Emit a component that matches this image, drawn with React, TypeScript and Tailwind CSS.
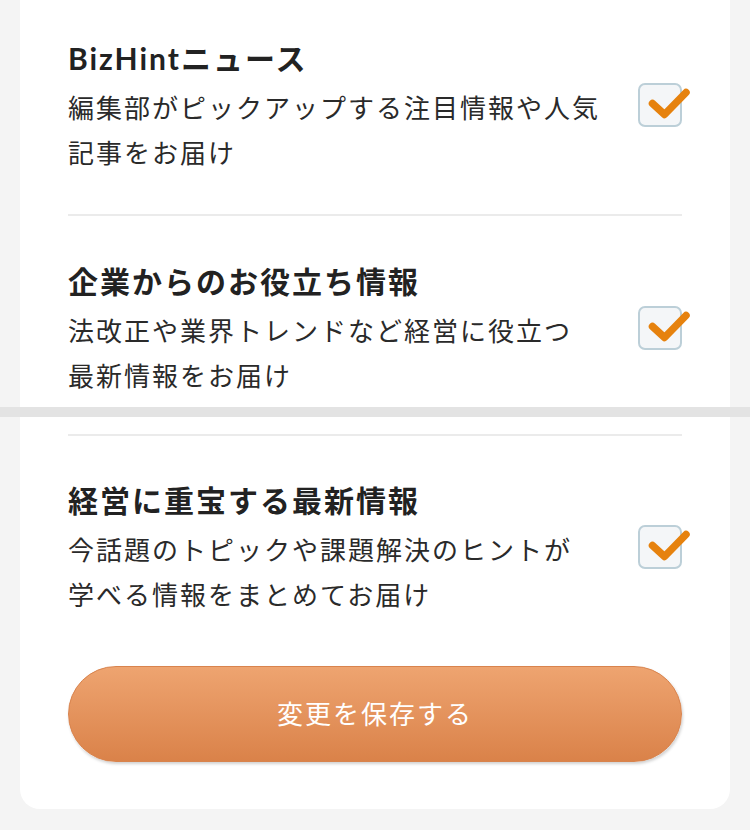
import React from "react";

const FONT = { fontFamily: 'Lato, "Noto Sans CJK JP", "Noto Sans", sans-serif' };

function Check() {
  return (
    <div className="relative mt-[-4px] h-[44px] w-[44px] shrink-0 rounded-[7px] border-2 border-[#bccfd8] bg-[#f4f6f8]">
      <svg
        className="absolute left-[-2px] top-[-2px] overflow-visible"
        width="44"
        height="44"
        viewBox="0 0 44 44"
      >
        <path
          d="M14.5 20.5 L26.5 31.5 L48 9.5"
          fill="none"
          stroke="#e6820e"
          strokeWidth="7.5"
          strokeLinecap="round"
          strokeLinejoin="round"
        />
      </svg>
    </div>
  );
}

function Item({ title, lines, cls }: { title: string; lines: string[]; cls: string }) {
  return (
    <div className={`flex items-center justify-between ${cls}`}>
      <div>
        <div className="text-[30px] font-bold leading-[40px] tracking-[2px] text-[#222]">{title}</div>
        <div className="mt-[8px] text-[26px] leading-[45px] tracking-[2px] text-[#2a2a2a]">
          {lines.map((l) => (
            <div key={l}>{l}</div>
          ))}
        </div>
      </div>
      <Check />
    </div>
  );
}

export default function App() {
  return (
    <div className="min-h-[830px] w-[750px] bg-[#f4f4f4]" style={FONT}>
      <div className="mx-[20px] bg-white px-[48px]">
        <Item
          title="BizHintニュース"
          lines={["編集部がピックアップする注目情報や人気", "記事をお届け"]}
          cls="pt-[38px] pb-[38px]"
        />
        <div className="h-[2px] bg-[#ebebeb]" />
        <Item
          title="企業からのお役立ち情報"
          lines={["法改正や業界トレンドなど経営に役立つ", "最新情報をお届け"]}
          cls="pt-[45px] pb-[8px]"
        />
      </div>
      <div className="h-[10px] bg-[#e3e3e3]" />
      <div className="mx-[20px] rounded-b-[20px] bg-white px-[48px] pt-[17px] pb-[47px]">
        <div className="h-[2px] bg-[#ebebeb]" />
        <Item
          title="経営に重宝する最新情報"
          lines={["今話題のトピックや課題解決のヒントが", "学べる情報をまとめてお届け"]}
          cls="pt-[44px] pb-[48px]"
        />
        <button className="flex h-[96px] w-full items-center justify-center rounded-full border border-[#d8834d] bg-gradient-to-b from-[#eea470] to-[#da8249] text-[26px] tracking-[2px] text-white shadow-[1px_2px_3px_rgba(0,0,0,0.18)]">
          変更を保存する
        </button>
      </div>
    </div>
  );
}
